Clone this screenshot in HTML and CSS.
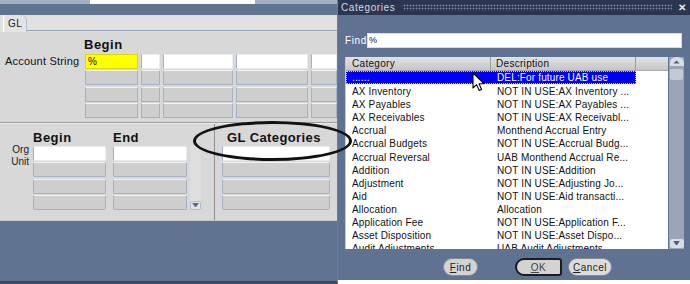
FILE: index.html
```html
<!DOCTYPE html>
<html lang="en">
<head>
    <meta charset="UTF-8">
    <meta name="viewport" content="width=device-width, initial-scale=1.0">
    <title>Categories</title>
    <link rel="stylesheet" href="styles.css">
</head>
<body>
<div class="screen">
    <div class="gl-window">
        <div class="top-strip"><span class="strip-gap"></span></div>
        <div class="blue-bar"></div>
        <div class="tabs">
            <div class="tab">GL</div>
            <div class="tab-rest"></div>
        </div>
        <div class="panel">
            <div class="acct">
                <div class="acct-head">Begin</div>
                <div class="acct-grid">
                    <div class="acct-label">Account String</div>
                    <div class="cell hl">%</div>
                    <div class="cell white"></div>
                    <div class="cell white"></div>
                    <div class="cell white"></div>
                    <div class="cell white"></div>

                    <div></div>
                    <div class="cell"></div>
                    <div class="cell"></div>
                    <div class="cell"></div>
                    <div class="cell"></div>
                    <div class="cell"></div>

                    <div></div>
                    <div class="cell"></div>
                    <div class="cell"></div>
                    <div class="cell"></div>
                    <div class="cell"></div>
                    <div class="cell"></div>

                    <div></div>
                    <div class="cell"></div>
                    <div class="cell"></div>
                    <div class="cell"></div>
                    <div class="cell"></div>
                    <div class="cell"></div>
                </div>
            </div>
            <div class="lower">
                <div class="org">
                    <div class="org-label">Org<br>Unit</div>
                    <div class="org-col begin">
                        <div class="col-head">Begin</div>
                        <div class="cells">
                            <div class="cell white round"></div>
                            <div class="cell round"></div>
                            <div class="cell round"></div>
                            <div class="cell round"></div>
                        </div>
                    </div>
                    <div class="org-col end">
                        <div class="col-head">End</div>
                        <div class="cells">
                            <div class="cell white round"></div>
                            <div class="cell round"></div>
                            <div class="cell round"></div>
                            <div class="cell round"></div>
                        </div>
                    </div>
                    <div class="org-scroll">
                        <span class="mini-btn">
                            <svg width="7" height="5" viewBox="0 0 7 5"><path d="M0.5 0.5h6M1.5 1.5l2 2.5 2-2.5z" fill="#5a6a86" stroke="#5a6a86" stroke-width="1"/></svg>
                        </span>
                    </div>
                </div>
                <div class="glcat">
                    <div class="col-head">GL Categories</div>
                    <div class="cells">
                        <div class="cell white round"></div>
                        <div class="cell round"></div>
                        <div class="cell round"></div>
                        <div class="cell round"></div>
                    </div>
                </div>
            </div>
        </div>
        <div class="footer"></div>
    </div>

    <div class="dialog">
        <div class="title-bar">
            <span class="title">Categories</span>
            <span class="title-dots"></span>
            <span class="close">✕</span>
        </div>
        <div class="dlg-body">
            <div class="find-row">
                <span class="find-label">Find</span>
                <div class="find-input">%</div>
            </div>
            <div class="list">
                <div class="table">
                    <div class="thead">
                        <div class="th cat">Category</div>
                        <div class="th desc">Description</div>
                        <div class="th blank"></div>
                    </div>
                    <div class="rows">
                        <div class="row sel"><span class="cat">......</span><span class="desc">DEL:For future UAB use</span></div>
                        <div class="row"><span class="cat">AX Inventory</span><span class="desc">NOT IN USE:AX Inventory ...</span></div>
                        <div class="row"><span class="cat">AX Payables</span><span class="desc">NOT IN USE:AX Payables ...</span></div>
                        <div class="row"><span class="cat">AX Receivables</span><span class="desc">NOT IN USE:AX Receivabl...</span></div>
                        <div class="row"><span class="cat">Accrual</span><span class="desc">Monthend Accrual Entry</span></div>
                        <div class="row"><span class="cat">Accrual Budgets</span><span class="desc">NOT IN USE:Accrual Budg...</span></div>
                        <div class="row"><span class="cat">Accrual Reversal</span><span class="desc">UAB Monthend Accrual Re...</span></div>
                        <div class="row"><span class="cat">Addition</span><span class="desc">NOT IN USE:Addition</span></div>
                        <div class="row"><span class="cat">Adjustment</span><span class="desc">NOT IN USE:Adjusting Jo...</span></div>
                        <div class="row"><span class="cat">Aid</span><span class="desc">NOT IN USE:Aid transacti...</span></div>
                        <div class="row"><span class="cat">Allocation</span><span class="desc">Allocation</span></div>
                        <div class="row"><span class="cat">Application Fee</span><span class="desc">NOT IN USE:Application F...</span></div>
                        <div class="row"><span class="cat">Asset Disposition</span><span class="desc">NOT IN USE:Asset Dispo...</span></div>
                        <div class="row"><span class="cat">Audit Adjustments</span><span class="desc">UAB Audit Adjustments</span></div>
                    </div>
                </div>
                <div class="vscroll">
                    <span class="sb-btn up">
                        <svg width="7" height="4" viewBox="0 0 7 4"><path d="M0.5 3.5l3-3 3 3z" fill="#4f5f7c"/></svg>
                    </span>
                    <span class="sb-thumb"></span>
                    <span class="sb-fill"></span>
                    <span class="sb-btn down">
                        <svg width="7" height="5" viewBox="0 0 7 5"><path d="M0.5 0.5h6M1.5 1.5l2 2.5 2-2.5z" fill="#4f5f7c" stroke="#4f5f7c" stroke-width="1"/></svg>
                    </span>
                </div>
            </div>
            <div class="buttons">
                <button class="btn find"><u>F</u>ind</button>
                <button class="btn ok"><u>O</u>K</button>
                <button class="btn cancel"><u>C</u>ancel</button>
            </div>
        </div>
    </div>

    <!-- annotation drawn over the screenshot -->
    <div class="ring"></div>
    <svg class="pointer" width="14" height="20" viewBox="0 0 14 20">
        <path d="M1 1v15l3.6-3.4 2.6 5.9 2.4-1-2.6-5.8h5z" fill="#fff" stroke="#000" stroke-width="1.1" stroke-linejoin="round"/>
    </svg>
</div>
</body>
</html>
```

FILE: styles.css
```css
body {
    margin: 0;
    background: #fff;
    font-family: 'Liberation Sans', Arial, sans-serif;
    color: #111;
}
.screen {
    position: relative;
    display: flex;
    width: 690px;
    height: 284px;
    overflow: hidden;
}

/* ---------- GL window (left) ---------- */
.gl-window {
    width: 337px;
    display: flex;
    flex-direction: column;
    border-right: 1px solid #6d7b93;
    background: #d8d8d8;
}
.top-strip {
    height: 4px;
    background: #a3afc3;
    position: relative;
}
.strip-gap {
    display: block;
    margin-left: 90px;
    width: 165px;
    height: 4px;
    background: #fff;
}
.blue-bar {
    height: 11px;
    background: #607391;
}
.tabs {
    height: 17px;
    display: flex;
    background: #e1e1e1;
}
.tab {
    width: 24px;
    margin-left: 3px;
    padding: 3px 0 0 4px;
    box-sizing: border-box;
    font-size: 10px;
    letter-spacing: 0.5px;
    color: #222;
    background: #e4e4e4;
    border-left: 1px solid #fff;
    border-right: 1px solid #b7bfcc;
    border-top-right-radius: 6px;
}
.tab-rest {
    flex: 1;
    border-bottom: 1px solid #97a3b8;
    height: 15px;
}
.panel {
    height: 188px;
    display: flex;
    flex-direction: column;
}
.acct {
    height: 91px;
    padding-top: 5px;
    box-sizing: border-box;
    border-bottom: 1px solid #9c9c9c;
}
.acct-head {
    height: 17px;
    padding-left: 84px;
    font-size: 13px;
    line-height: 16px;
    font-weight: bold;
    letter-spacing: 0.5px;
}
.acct-grid {
    display: grid;
    grid-template-columns: 82px 53px 19px 70px 72px 1fr;
    grid-template-rows: repeat(4, 15px);
    column-gap: 3px;
    row-gap: 1.3px;
}
.acct-label {
    padding-left: 5px;
    font-size: 11px;
    line-height: 15px;
    letter-spacing: 0.2px;
    white-space: nowrap;
}
.cell {
    box-sizing: border-box;
    height: 15px;
    background: #cecece;
    border: 1px solid #a5b0c3;
    border-top-color: #f2f2f2;
    font-size: 10px;
    line-height: 13px;
    padding-left: 2px;
}
.cell.white {
    background: #fff;
    border-color: #e9ecf1;
    border-left-color: #a5b0c3;
}
.cell.hl {
    background: #ffff00;
    border-color: #e0d800;
}
.cell.round {
    border-radius: 2px;
}

.lower {
    flex: 1;
    display: flex;
    border-top: 1px solid #ececec;
}
.org {
    width: 214px;
    display: flex;
    border-right: 1px solid #8e8e8e;
}
.org-label {
    width: 29px;
    padding-top: 20px;
    text-align: right;
    font-size: 10px;
    line-height: 12px;
    color: #222;
}
.org-col {
    display: flex;
    flex-direction: column;
}
.org-col.begin {
    width: 73px;
    margin-left: 4px;
}
.org-col.end {
    width: 74px;
    margin-left: 7px;
}
.col-head {
    height: 22px;
    padding-top: 6px;
    box-sizing: border-box;
    font-size: 13px;
    line-height: 16px;
    font-weight: bold;
    letter-spacing: 0.5px;
    white-space: nowrap;
}
.cells {
    display: flex;
    flex-direction: column;
    gap: 1.3px;
}
.org-scroll {
    width: 11px;
    height: 64px;
    margin: 22px 0 0 3px;
    background: #dedede;
    display: flex;
    align-items: flex-end;
}
.mini-btn {
    width: 11px;
    height: 9px;
    box-sizing: border-box;
    background: #e2e4ea;
    border: 1px solid #b4bccb;
    border-radius: 2px;
    display: flex;
    align-items: center;
    justify-content: center;
}
.glcat {
    width: 108px;
    margin-left: 7px;
}
.glcat .col-head {
    padding-left: 5px;
    letter-spacing: 0.4px;
}
.footer {
    flex: 1;
    background: #607391;
    border-bottom: 3px solid #474a52;
    border-top: 1px solid #c9c9c9;
}

/* ---------- Categories dialog (right) ---------- */
.dialog {
    width: 352px;
    height: 280px;
    display: flex;
    flex-direction: column;
    background: #5f7292;
}
.title-bar {
    height: 15px;
    background: #2a3552;
    display: flex;
    align-items: center;
}
.title {
    padding-left: 3px;
    font-size: 10px;
    letter-spacing: 0.6px;
    color: #d6d9e0;
}
.title-dots {
    flex: 1;
    height: 7px;
    margin: 0 6px 0 8px;
    background-image: radial-gradient(circle, #8390a8 0.8px, transparent 1.1px);
    background-size: 3px 3px;
}
.close {
    width: 12px;
    font-size: 10px;
    font-weight: bold;
    color: #e8eaef;
}
.dlg-body {
    flex: 1;
    padding: 18px 6px 0 7px;
    display: flex;
    flex-direction: column;
}
.find-row {
    display: flex;
    height: 15px;
    padding-right: 2px;
}
.find-label {
    width: 22px;
    font-size: 10px;
    line-height: 15px;
    letter-spacing: 0.6px;
    color: #fff;
}
.find-input {
    flex: 1;
    background: #fff;
    border: 1px solid #d8dce4;
    box-sizing: border-box;
    font-size: 9px;
    line-height: 13px;
    padding-left: 1px;
}
.list {
    margin-top: 9px;
    height: 192px;
    display: flex;
}
.table {
    width: 323px;
    background: #fff;
    border-left: 1px solid #c5cad4;
    box-sizing: border-box;
    overflow: hidden;
}
.thead {
    display: flex;
    height: 13px;
    background: linear-gradient(#e2e2e2, #c6c6c6);
    border-bottom: 1px solid #a9a9a9;
}
.th {
    box-sizing: border-box;
    font-size: 10px;
    line-height: 13px;
    letter-spacing: 0.3px;
    border-right: 1px solid #9c9c9c;
}
.th.cat {
    width: 145px;
    padding-left: 6px;
}
.th.desc {
    width: 145px;
    padding-left: 5px;
}
.th.blank {
    flex: 1;
    border-right: none;
}
.rows {
    display: flex;
    flex-direction: column;
}
.row {
    display: flex;
    width: 290px;
    height: 13.1px;
    box-sizing: border-box;
    font-size: 10px;
    line-height: 13px;
    letter-spacing: 0.15px;
    white-space: nowrap;
    padding-top: 1px;
}
.row .cat {
    width: 145px;
    padding-left: 6px;
    box-sizing: border-box;
}
.row .desc {
    padding-left: 6px;
}
.row.sel {
    background: #0000f2;
    color: #fff;
    outline: 1px dotted #c8c8ff;
    outline-offset: -1px;
    padding-top: 0;
}
.vscroll {
    width: 15px;
    margin-left: 1px;
    background: #9aa5b8;
    display: flex;
    flex-direction: column;
    align-items: center;
}
.sb-btn {
    width: 14px;
    height: 9px;
    background: #d9dde4;
    display: flex;
    align-items: center;
    justify-content: center;
}
.sb-btn.up {
    border-radius: 6px 6px 0 0;
}
.sb-btn.down {
    border-radius: 2px;
    margin-bottom: 1px;
}
.sb-thumb {
    width: 13px;
    height: 11px;
    margin-top: 3px;
    background: #c4cad5;
    border-radius: 2px;
}
.sb-fill {
    flex: 1;
}
.buttons {
    display: flex;
    margin-top: 9px;
    padding-left: 98px;
}
.btn {
    height: 18px;
    padding: 0;
    font-family: 'Liberation Sans', Arial, sans-serif;
    font-size: 10px;
    letter-spacing: 0.5px;
    color: #222;
    background: #d3d3d3;
    border: 1px solid #8a8a8a;
    border-radius: 9px;
}
.btn.find {
    width: 35px;
}
.btn.ok {
    width: 47px;
    margin-left: 37px;
    border: 2px solid #1c1c1c;
    border-radius: 9px 3px 3px 9px;
    color: #444;
}
.btn.cancel {
    width: 44px;
    margin-left: 6px;
    background: #dcdcdc;
}

/* ---------- annotation overlay ---------- */
.ring {
    position: absolute;
    left: 193px;
    top: 121px;
    width: 159px;
    height: 40px;
    box-sizing: border-box;
    border: 3px solid #111;
    border-radius: 50%;
}
.pointer {
    position: absolute;
    left: 472px;
    top: 72px;
}
```
